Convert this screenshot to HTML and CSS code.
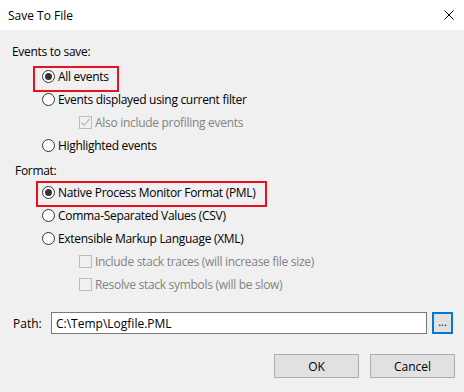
FILE: index.html
```html
<!DOCTYPE html>
<html>
<head>
<meta charset="utf-8">
<link rel="stylesheet" href="styles.css">
</head>
<body>
<div class="dialog">
  <div class="titlebar">
    <span class="title">Save To File</span>
    <svg class="close" width="10" height="10" viewBox="0 0 10 10"><path d="M0.5 0.5 L9.5 9.5 M9.5 0.5 L0.5 9.5" stroke="#000" stroke-width="1" fill="none"/></svg>
  </div>
  <div class="content">
    <div class="group-label events-label">Events to save:</div>
    <div class="options">
      <div class="row radio-row mark mark1"><span class="radio checked"></span><span class="txt">All events</span></div>
      <div class="row radio-row"><span class="radio"></span><span class="txt">Events displayed using current filter</span></div>
      <div class="row check-row disabled"><span class="check checked"><svg width="11" height="11" viewBox="0 0 11 11"><path d="M1.5 5.5 L4.2 8.3 L9.5 2" stroke="#bcbcbc" stroke-width="1.3" fill="none"/></svg></span><span class="txt">Also include profiling events</span></div>
      <div class="row radio-row"><span class="radio"></span><span class="txt">Highlighted events</span></div>
    </div>
    <div class="group-label format-label">Format:</div>
    <div class="options">
      <div class="row radio-row mark mark2"><span class="radio checked"></span><span class="txt">Native Process Monitor Format (PML)</span></div>
      <div class="row radio-row"><span class="radio"></span><span class="txt">Comma-Separated Values (CSV)</span></div>
      <div class="row radio-row"><span class="radio"></span><span class="txt">Extensible Markup Language (XML)</span></div>
      <div class="row check-row disabled"><span class="check"></span><span class="txt">Include stack traces (will increase file size)</span></div>
      <div class="row check-row disabled"><span class="check"></span><span class="txt">Resolve stack symbols (will be slow)</span></div>
    </div>
    <div class="path-row">
      <span class="path-label">Path:</span>
      <div class="path-input">C:\Temp\Logfile.PML</div>
      <div class="browse">...</div>
    </div>
    <div class="buttons">
      <div class="btn">OK</div>
      <div class="btn">Cancel</div>
    </div>
  </div>
</div>
</body>
</html>
```

FILE: styles.css
```css
* { box-sizing: border-box; }
html, body { margin: 0; padding: 0; }
body {
  width: 464px;
  height: 392px;
  background: #f0f0f0;
  font-family: "Open Sans", "Noto Sans", sans-serif;
  font-size: 12px;
  color: #000;
  overflow: hidden;
}
.dialog { display: flex; flex-direction: column; height: 392px; }
.titlebar {
  height: 30px;
  background: #fff;
  display: flex;
  align-items: center;
  justify-content: space-between;
  padding: 0 10px 0 8px;
}
.title { font-size: 12px; }
.close { display: block; margin-top: -1px; }
.content { display: flex; flex-direction: column; padding-top: 10px; letter-spacing: -0.3px; }
.group-label { height: 23px; display: flex; align-items: center; }
.events-label { padding-left: 12px; }
.format-label { padding-left: 15px; margin-top: 2px; margin-bottom: -1px; }
.options { display: flex; flex-direction: column; }
.events-label + .options { margin-top: 2px; }
.row { height: 23px; display: flex; align-items: center; position: relative; white-space: nowrap; }
.radio-row { padding-left: 42px; }
.check-row { padding-left: 79px; }
.radio {
  width: 13px; height: 13px;
  border: 1px solid #333;
  border-radius: 50%;
  background: #fff;
  margin-right: 3px;
  display: flex; align-items: center; justify-content: center;
  flex: none;
}
.radio.checked::before {
  content: "";
  width: 7px; height: 7px; border-radius: 50%; background: #333;
}
.check {
  width: 13px; height: 13px;
  border: 1px solid #bcbcbc;
  background: #f0f0f0;
  margin-right: 3px;
  display: flex; align-items: center; justify-content: center;
  flex: none;
}
.check svg { display: block; }
.disabled .txt { color: #838383; }
.mark::after {
  content: "";
  position: absolute;
  border: 2px solid #e81123;
  pointer-events: none;
}
.mark1::after { left: 33px; top: 1px; width: 82px; height: 22px; }
.mark2::after { left: 36px; top: 0; width: 227px; height: 22px; }
.path-row { display: flex; align-items: center; margin-top: 16px; height: 22px; letter-spacing: 0; }
.path-label { width: 51px; padding-left: 13px; }
.path-input {
  width: 376px; height: 22px;
  border: 1px solid #7a7a7a;
  background: #fff;
  padding-left: 4px;
  display: flex; align-items: center;
}
.browse {
  margin-left: 5px;
  width: 21px; height: 22px;
  border: 2px solid #0078d7;
  background: #e1e1e1;
  display: flex; align-items: center; justify-content: center;
  font-size: 11px;
  padding-bottom: 3px;
}
.buttons { display: flex; justify-content: flex-end; gap: 11px; margin-top: 20px; padding-right: 9px; letter-spacing: 0; }
.btn {
  width: 85px; height: 24px;
  border: 1px solid #adadad;
  background: #e1e1e1;
  display: flex; align-items: center; justify-content: center;
}
```
